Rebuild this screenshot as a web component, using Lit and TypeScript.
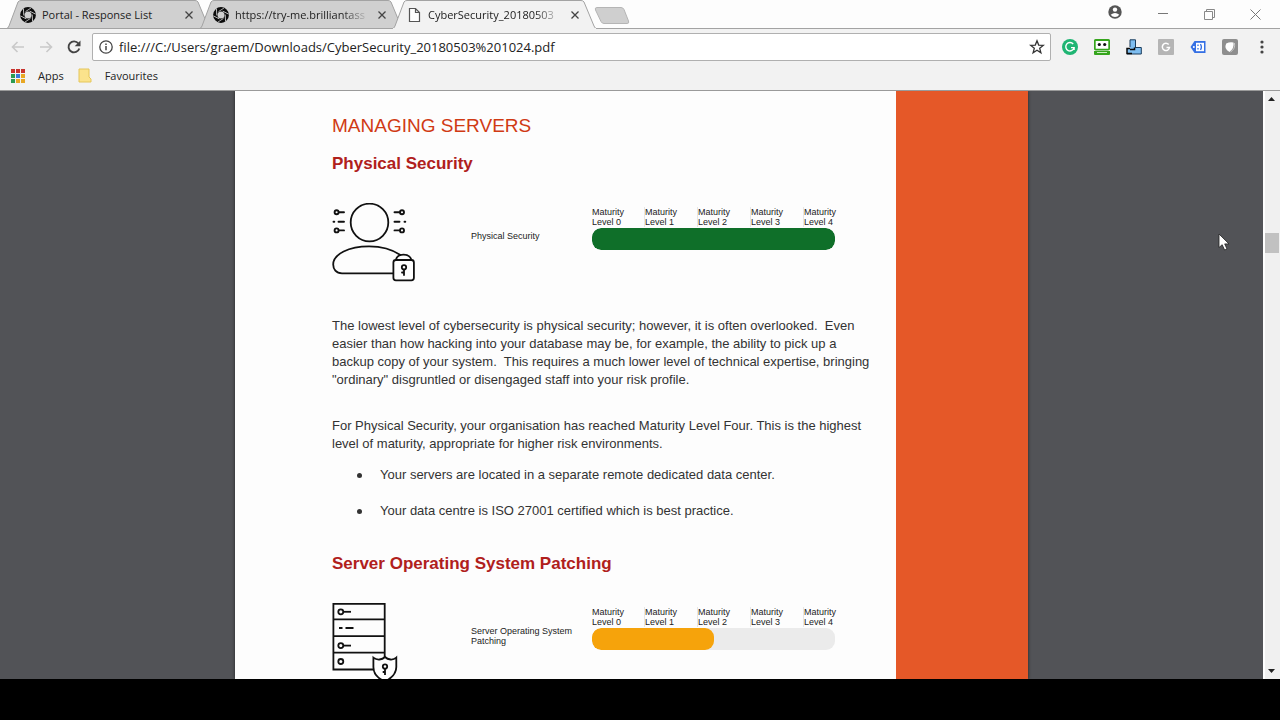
import { LitElement, html, css, svg } from "lit";
import { customElement, property } from "lit/decorators.js";

const aperture = svg`
  <circle cx="8" cy="8" r="5.700" fill="none" stroke="#0c0c0c" stroke-width="4.400"/>
  <g stroke="#d3d3d3" stroke-width=".8" fill="none">
    ${[0, 60, 120, 180, 240, 300].map((a) => svg`<path d="M5.500 4.600 11 1" transform="rotate(${a} 8 8)"/>`)}
  </g>`;

const pageIcon = svg`<path d="M3.500 1.500h6l4 4v9h-10zM9.500 1.500v4h4" fill="#fff" stroke="#555" stroke-width="1.200"/>`;

@customElement("browser-tab")
class BrowserTab extends LitElement {
  static styles = css`
    :host { display: block; position: relative; flex: 0 1 205px; min-width: 0; height: 29px; margin-right: -12px; }
    :host([active]) { z-index: 1; }
    .shape { position: absolute; inset: 0; width: 100%; height: 100%; }
    .row { position: relative; display: flex; align-items: center; height: 29px; padding: 0 14px; gap: 5px; }
    .select { flex: 1; min-width: 0; display: flex; align-items: center; gap: 6px; border: 0; padding: 0; background: none; font: 11px/20px "Open Sans", sans-serif; color: #222; text-align: left; }
    .icon { flex: none; width: 16px; height: 16px; }
    .title { flex: 1; white-space: nowrap; }
    .fade { -webkit-mask-image: linear-gradient(to right, #000 80%, transparent); mask-image: linear-gradient(to right, #000 80%, transparent); }
    .close { flex: none; display: flex; border: 0; padding: 4px; background: none; }
  `;
  @property() label = "";
  @property({ type: Boolean, reflect: true }) active = false;
  @property({ type: Boolean }) long = false;

  render() {
    return html`
      <svg class="shape" viewBox="0 0 205 29" preserveAspectRatio="none" aria-hidden="true">
        <path d="M0 29 Q2 28.500 3 26 L12 2 Q13 .5 15 .5 H189 Q191 .5 192 2 L202 26 Q203 28.500 205 29Z"
          fill=${this.active ? "#f2f2f2" : "#d0d0d0"} stroke="#a3a3a3" stroke-width="1"/>
        ${this.active ? svg`<path d="M1 28.500H204" stroke="#f2f2f2"/>` : svg`<path d="M0 28.500H205" stroke="#a3a3a3"/>`}
      </svg>
      <div class="row">
        <button class="select" role="tab" aria-selected=${this.active ? "true" : "false"}>
          <svg class="icon" viewBox="0 0 16 16" aria-hidden="true">${this.active ? pageIcon : aperture}</svg>
          <span class="title ${this.long ? "fade" : ""}">${this.label}</span>
        </button>
        <button class="close" aria-label="Close ${this.label}">
          <svg width="8" height="8" viewBox="0 0 8 8"><path d="M.5.5 7.500 7.500M7.500.5.5 7.500" stroke="#444" stroke-width="1.300"/></svg>
        </button>
      </div>`;
  }
}

@customElement("maturity-chart")
class MaturityChart extends LitElement {
  static styles = css`
    :host { display: grid; grid-template-columns: 139px 121px 243px; height: 80px; margin: 27px 0 34px; font: 9px/10px "Liberation Sans", Arial, sans-serif; color: #222; }
    .name { display: flex; align-items: center; height: 66px; padding-right: 8px; }
    .scale { padding-top: 4px; }
    .levels { display: flex; justify-content: space-between; margin: 0; padding: 0 0 1px; list-style: none; }
    .level { width: 31px; white-space: nowrap; }
    .level + .level { box-shadow: -1px 0 #e6e6e6; }
    .track { height: 22px; border-radius: 9px; background: #ebebeb; overflow: hidden; }
    .fill { height: 100%; border-radius: 9px; background: #0f6f29; }
    .partial { background: #f6a30b; }
  `;
  @property() name = "";
  @property({ type: Number }) level = 0;

  render() {
    return html`
      <slot></slot>
      <div class="name">${this.name}</div>
      <div class="scale">
        <ul class="levels">${[0, 1, 2, 3, 4].map((n) => html`<li class="level">Maturity<br>Level ${n}</li>`)}</ul>
        <div class="track" role="meter" aria-label=${this.name} aria-valuemin="0" aria-valuemax="4" aria-valuenow=${this.level}>
          <div class="fill ${this.level < 4 ? "partial" : ""}" style="width:${this.level * 25}%"></div>
        </div>
      </div>`;
  }
}

const personIcon = html`<svg width="84" height="80" viewBox="0 0 84 80" fill="none" stroke="#111" stroke-width="1.800" stroke-linecap="round" aria-hidden="true">
  <circle cx="37.500" cy="19.500" r="18.800"/>
  <path d="M63.500 70.300H10C4 70.300 1.200 66 1.200 61.500 1.200 51 17 43.400 37 43.400 50 43.400 61 47 68.500 52"/>
  <g stroke-width="1.900">
    <circle cx="4.600" cy="9.200" r="2"/><path d="M7 9.200h5"/>
    <path d="M1.500 18.700h.8M6.500 18.700h5.500"/>
    <circle cx="4.600" cy="27.400" r="2"/><path d="M7 27.400h5"/>
    <circle cx="70" cy="9.200" r="2"/><path d="M62.500 9.200h5"/>
    <path d="M62.500 18.700h5M72.500 18.700h.8"/>
    <circle cx="70" cy="27.400" r="2"/><path d="M62.500 27.400h5"/>
  </g>
  <rect x="61.400" y="57" width="20.500" height="20.300" rx="2.500" fill="#fff"/>
  <path d="M64 56.500C65 53 68 51.700 71.500 51.700S78 53 79.300 56.500"/>
  <circle cx="72" cy="64.300" r="2.200"/><path d="M72 67v5M72 69.500h-2"/>
</svg>`;

const serverIcon = html`<svg width="84" height="80" viewBox="0 0 84 80" fill="none" stroke="#111" stroke-width="1.800" aria-hidden="true">
  <path d="M1.400.8H52.700V66.500H1.400ZM1.400 16.300H52.700M1.400 33.200H52.700M1.400 49.700H52.700"/>
  <circle cx="8.800" cy="8.800" r="2.500"/><path d="M11.500 8.800h7.500"/>
  <path d="M7 25h3.500M13.500 25h8"/>
  <circle cx="8.800" cy="42.600" r="2.500"/><path d="M11.500 42.600h7.500"/>
  <circle cx="8.800" cy="58.500" r="2.500"/>
  <path d="M53 54C56 57 61 57.500 64.300 54.600V64C64.300 71 59 75.500 53 78.500 46 75.500 41.400 71 41.400 64V54.600C45 57.500 50 57 53 54Z" fill="#fff"/>
  <circle cx="53" cy="63.500" r="2.200"/><path d="M53 66v6M53 69h-2.300"/>
</svg>`;

const extensions = [
  { name: "Grammarly", art: svg`<circle cx="8" cy="8" r="8" fill="#1fb573"/><path d="M11.200 5A4.200 4.200 0 1 0 12.100 8.600H9M12.100 8.600V11" fill="none" stroke="#fff" stroke-width="1.400"/>` },
  { name: "Password manager", art: svg`<rect x=".8" y="1" width="14.400" height="9.600" rx="1" fill="#fff" stroke="#36a51d" stroke-width="1.800"/><circle cx="5.300" cy="5.500" r="1.600" fill="#111"/><circle cx="10.700" cy="5.500" r="1.600" fill="#111"/><path d="M0 12h16v3q0 1-1 1H1q-1 0-1-1z" fill="#36a51d"/><path d="M3 13.500h10" stroke="#c9efc0" stroke-width="1"/>` },
  { name: "Downloads", art: svg`<path d="M4 .8H9.500V8.500H15.300V15H1V10H4Z" fill="#7dbdf0"/><path d="M4 8V.8H9.500V8.500M9 8.500H15.300V15H1" stroke="#1b3d5c" stroke-width="1" fill="none"/><path d="M4 9.500H1V14.500H6M4 10.500H8.500V8.500" stroke="#080808" stroke-width="1.500" fill="none"/>` },
  { name: "Translate", art: svg`<rect width="16" height="16" rx="1" fill="#b5b5b5"/><path d="M10.700 5.600A3.600 3.600 0 1 0 11.500 8.500H8.500" fill="none" stroke="#fff" stroke-width="1.500"/>` },
  { name: "Tag", art: svg`<path d="M4.500 2H15.500V14H4.500L.5 8Z" fill="#3570e4"/><rect x="6" y="3.800" width="8" height="8.400" fill="#fff"/><path d="M8 5.500v1.600M8 9v1.600M10.500 5q1.800 3 0 6" stroke="#3570e4" stroke-width="1.300" fill="none"/><circle cx="3.800" cy="8" r="1" fill="#fff"/>` },
  { name: "Shield", art: svg`<rect width="16" height="16" rx="2" fill="#8e8e8e"/><path d="M4.200 4.500Q8 2.500 11.500 3.500 12.500 9 7.500 13 1.500 10 4.200 4.500Z" fill="#fff"/><path d="M12.500 4q1 6-4 9" stroke="#c9c9c9" fill="none"/>` },
];

const appColours = ["#c8322d", "#c8322d", "#c8322d", "#2b9b50", "#3878d8", "#e8a723", "#2b9b50", "#e8a723", "#e8a723"];

@customElement("app-root")
class AppRoot extends LitElement {
  static styles = css`
    :host { display: flex; flex-direction: column; height: 100vh; overflow: hidden; position: relative; background: #000; font-family: "Open Sans", sans-serif; color: #222; }
    button { border: 0; padding: 0; background: none; color: inherit; display: flex; align-items: center; justify-content: center; }
    .tabs { display: flex; flex: none; height: 29px; padding-left: 6px; background: linear-gradient(#a3a3a3, #a3a3a3) bottom / 100% 1px no-repeat #fdfdfd; }
    .new { width: 36px; height: 18px; margin: 7px 0 0 9px; }
    .window { display: flex; margin-left: auto; padding-right: 2px; }
    .window button { width: 46px; height: 28px; }
    .window .account { width: 50px; height: 24px; }
    .toolbar { display: flex; flex: none; align-items: center; height: 36px; padding: 0 2px 0 4px; background: #f2f2f2; }
    .toolbar > button { width: 28px; height: 28px; }
    .address { flex: 1; display: flex; align-items: center; box-sizing: border-box; height: 28px; margin: 0 3px 0 4px; padding: 0 5px; border: 1px solid #b0b0b0; border-radius: 2px; background: #fff; }
    .address input { flex: 1; min-width: 0; border: 0; padding: 0 0 0 5px; outline: 0; background: none; font: 13px/20px "Open Sans", sans-serif; color: #222; }
    .extensions { display: flex; }
    .extensions button { width: 32px; height: 28px; }
    .bookmarks { display: flex; flex: none; align-items: center; box-sizing: border-box; height: 26px; padding: 0 10px 4px; background: #f2f2f2; border-bottom: 1px solid #9a9a9a; font-size: 11px; line-height: 20px; }
    .bookmarks a { display: flex; align-items: center; gap: 13px; margin-right: 14px; color: inherit; text-decoration: none; }
    .viewer { flex: 1; min-height: 0; display: flex; background: #525357; }
    .canvas { flex: 1; min-width: 0; display: flex; justify-content: center; overflow: hidden; }
    .page { display: flex; flex: 0 1 793px; background: #fdfdfd; box-shadow: 0 0 3px #222; }
    .content { flex: 1; min-width: 0; padding: 23px 18px 0 97px; font: 13px/18px "Liberation Sans", Arial, sans-serif; color: #333; }
    .stripe { flex: 0 0 132px; background: #e55828; }
    h1 { margin: 0 0 14px; font-size: 19px; line-height: 24px; font-weight: 400; color: #d03a14; }
    h2 { margin: 0; font-size: 17px; line-height: 24px; color: #b0201c; }
    p { margin: 0 0 28px; }
    .tight { margin-bottom: 13px; }
    .findings { margin: 0 0 32px; padding: 0; list-style: none; }
    .findings li { display: flex; align-items: center; margin-bottom: 18px; }
    .findings li::before { content: ""; width: 5px; height: 5px; margin: 0 18px 0 25px; border-radius: 50%; background: #333; }
    .scroll { flex: none; box-sizing: border-box; width: 17px; display: flex; flex-direction: column; border-left: 2px solid #fff; background: #f0f0f0; }
    .scroll button { width: 13px; height: 16px; }
    .lane { flex: 1; padding-top: 126px; }
    .thumb { height: 20px; margin-right: 1px; background: #c1c1c1; }
    .letterbox { flex: none; height: 41px; }
    .pointer { position: absolute; left: 1218px; top: 233px; }
  `;

  render() {
    return html`
      <header class="tabs">
        <browser-tab label="Portal - Response List"></browser-tab>
        <browser-tab label="https://try-me.brilliantass" long></browser-tab>
        <browser-tab label="CyberSecurity_20180503" active long></browser-tab>
        <button class="new" aria-label="New tab"><svg width="36" height="18" viewBox="0 0 36 18"><path d="M3 .5H27Q29 .5 30 2.500L34.500 14Q35.500 16.500 33 16.500H10Q8 16.500 7 14.500L1.500 3Q.5.5 3 .5Z" fill="#cfcfcf" stroke="#b5b5b5"/></svg></button>
        <div class="window">
          <button class="account" aria-label="Account"><svg width="14" height="14" viewBox="0 0 14 14"><circle cx="7" cy="7" r="6.700" fill="#555"/><circle cx="7" cy="4.600" r="2.200" fill="#fff"/><path d="M2.700 9.700Q7 6.300 11.300 9.700 9.700 12 7 12T2.700 9.700Z" fill="#fff"/></svg></button>
          <button aria-label="Minimise"><svg width="10" height="10" viewBox="0 0 10 10"><path d="M0 4.500H10" stroke="#777"/></svg></button>
          <button aria-label="Restore"><svg width="11" height="11" viewBox="0 0 11 11" fill="none" stroke="#888"><path d="M.5 2.500h8v8h-8zM2.500 2.500v-2h8v8h-2"/></svg></button>
          <button aria-label="Close"><svg width="11" height="11" viewBox="0 0 11 11"><path d="M.5.5l10 10M10.500.5l-10 10" stroke="#777"/></svg></button>
        </div>
      </header>

      <nav class="toolbar" aria-label="Navigation">
        <button aria-label="Back"><svg width="14" height="12" viewBox="0 0 14 12" fill="none" stroke="#c9c9c9" stroke-width="1.600"><path d="M13 6H1.500M6.500 1l-5 5 5 5"/></svg></button>
        <button aria-label="Forward"><svg width="14" height="12" viewBox="0 0 14 12" fill="none" stroke="#c9c9c9" stroke-width="1.600"><path d="M1 6h11.500M7.500 1l5 5-5 5"/></svg></button>
        <button aria-label="Reload"><svg width="14" height="14" viewBox="0 0 14 14"><path d="M11.400 3.500A5.500 5.500 0 1 0 12.300 8.500" fill="none" stroke="#444" stroke-width="1.900"/><path d="M13.500.5V6.300H7.700Z" fill="#444"/></svg></button>
        <div class="address">
          <svg width="16" height="16" viewBox="0 0 16 16" aria-hidden="true"><circle cx="8" cy="8" r="6.200" fill="none" stroke="#444" stroke-width="1.300"/><path d="M8 7v4.300M8 4.500v1.500" stroke="#444" stroke-width="1.500"/></svg>
          <input aria-label="Address" value="file:///C:/Users/graem/Downloads/CyberSecurity_20180503%201024.pdf">
          <button aria-label="Bookmark this page"><svg width="16" height="16" viewBox="0 0 16 16"><path d="M8 1.800 9.700 6.100 14.300 6.400 10.700 9.300 11.900 13.800 8 11.300 4.100 13.800 5.300 9.300 1.700 6.400 6.300 6.100Z" fill="none" stroke="#333" stroke-width="1.300"/></svg></button>
        </div>
        <div class="extensions">
          ${extensions.map((e) => html`<button aria-label=${e.name}><svg width="16" height="16" viewBox="0 0 16 16">${e.art}</svg></button>`)}
          <button aria-label="Menu"><svg width="4" height="14" viewBox="0 0 4 14" fill="#444"><circle cx="2" cy="2" r="1.600"/><circle cx="2" cy="7" r="1.600"/><circle cx="2" cy="12" r="1.600"/></svg></button>
        </div>
      </nav>

      <nav class="bookmarks" aria-label="Bookmarks">
        <a href="#apps"><svg width="15" height="14" viewBox="0 0 15 14">${appColours.map((c, i) => svg`<rect x=${1 + (i % 3) * 5} y=${Math.floor(i / 3) * 5} width="4" height="4" fill=${c}/>`)}</svg>Apps</a>
        <a href="#favourites"><svg width="14" height="15" viewBox="0 0 14 15"><path d="M1 1H11V9L13 11V14H1Z" fill="#fbe38c" stroke="#e5c65a"/></svg>Favourites</a>
      </nav>

      <main class="viewer">
        <div class="canvas">
          <article class="page">
            <div class="content">
              <h1>MANAGING SERVERS</h1>
              <h2>Physical Security</h2>
              <maturity-chart name="Physical Security" level="4">${personIcon}</maturity-chart>
              <p>The lowest level of cybersecurity is physical security; however, it is often overlooked.&nbsp; Even easier than how hacking into your database may be, for example, the ability to pick up a backup copy of your system.&nbsp; This requires a much lower level of technical expertise, bringing "ordinary" disgruntled or disengaged staff into your risk profile.</p>
              <p class="tight">For Physical Security, your organisation has reached Maturity Level Four. This is the highest level of maturity, appropriate for higher risk environments.</p>
              <ul class="findings">
                <li>Your servers are located in a separate remote dedicated data center.</li>
                <li>Your data centre is ISO 27001 certified which is best practice.</li>
              </ul>
              <h2>Server Operating System Patching</h2>
              <maturity-chart name="Server Operating System Patching" level="2">${serverIcon}</maturity-chart>
            </div>
            <div class="stripe"></div>
          </article>
        </div>
        <div class="scroll">
          <button aria-label="Scroll up"><svg width="7" height="4" viewBox="0 0 7 4"><path d="M0 4 3.500 0 7 4Z" fill="#222"/></svg></button>
          <div class="lane"><div class="thumb"></div></div>
          <button aria-label="Scroll down"><svg width="7" height="4" viewBox="0 0 7 4"><path d="M0 0H7L3.500 4Z" fill="#222"/></svg></button>
        </div>
      </main>
      <div class="letterbox"></div>
      <svg class="pointer" width="12" height="18" viewBox="0 0 12 18" aria-hidden="true"><path d="M1 1V14.500L4.200 11.700 6.600 17 9 16 6.700 10.900H11Z" fill="#fff" stroke="#222" stroke-width=".8"/></svg>`;
  }
}
